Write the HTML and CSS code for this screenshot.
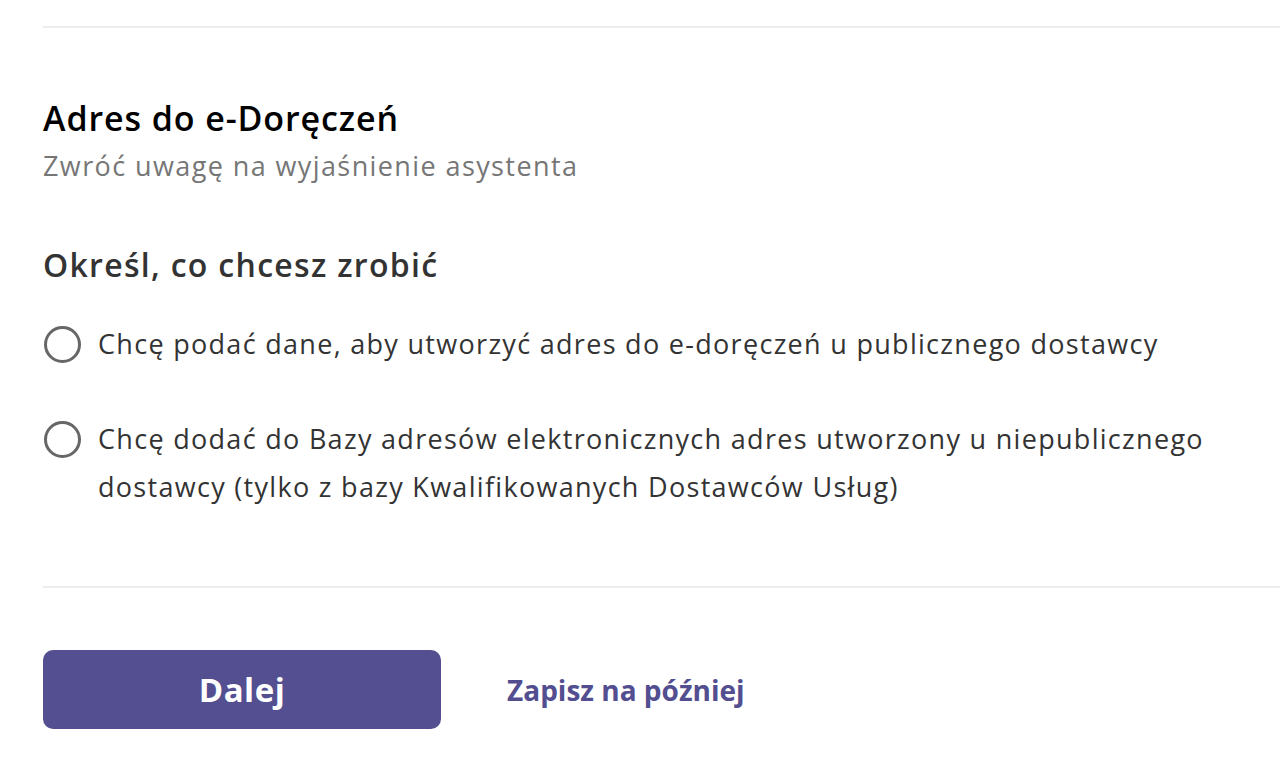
FILE: index.html
```html
<!DOCTYPE html>
<html lang="pl">
<head>
  <meta charset="UTF-8" />
  <title>Adres do e-Doręczeń</title>
  <link rel="stylesheet" href="styles.css">
</head>
<body>
  <div class="page">
    <div class="divider"></div>

    <!-- nagłówek sekcji -->
    <div class="section-head">
      <h1 class="title">Adres do e-Doręczeń</h1>
      <p class="subtitle">Zwróć uwagę na wyjaśnienie asystenta</p>
    </div>

    <!-- wybór opcji -->
    <div class="choice">
      <h2 class="choice-title">Określ, co chcesz zrobić</h2>
      <label class="radio-row">
        <input type="radio" name="action" value="public" />
        <span class="radio-mark"></span>
        <span class="radio-text">Chcę podać dane, aby utworzyć adres do e-doręczeń u publicznego dostawcy</span>
      </label>
      <label class="radio-row">
        <input type="radio" name="action" value="private" />
        <span class="radio-mark"></span>
        <span class="radio-text">Chcę dodać do Bazy adresów elektronicznych adres utworzony u niepublicznego dostawcy (tylko z bazy Kwalifikowanych Dostawców Usług)</span>
      </label>
    </div>

    <div class="divider"></div>

    <!-- przyciski -->
    <div class="actions">
      <button type="button" class="btn-primary">Dalej</button>
      <a href="#" class="link-later">Zapisz na później</a>
    </div>
  </div>
</body>
</html>
```

FILE: styles.css
```css
body {
  margin: 0;
  background: #fff;
  font-family: "Open Sans", "Noto Sans", sans-serif;
  color: #333;
}

.page {
  padding-left: 43px;
  padding-top: 26px;
}

.divider {
  height: 2px;
  background: #ededed;
}

.section-head {
  padding-top: 70px;
}

.title {
  margin: 0;
  font-size: 34px;
  font-weight: 600;
  line-height: 40px;
  color: #000;
  letter-spacing: 0.9px;
}

.subtitle {
  margin: 10px 0 0;
  font-size: 27px;
  line-height: 36px;
  color: #767676;
  letter-spacing: 1.4px;
}

.choice {
  padding-top: 61px;
  padding-bottom: 75px;
}

.choice-title {
  margin: 0 0 35px;
  font-size: 32px;
  font-weight: 600;
  line-height: 40px;
  color: #333;
  letter-spacing: 1.3px;
}

.radio-row {
  display: flex;
  align-items: flex-start;
  gap: 17px;
  margin-bottom: 47px;
  cursor: pointer;
}

.radio-row:last-child {
  margin-bottom: 0;
}

.radio-row input {
  display: none;
}

.radio-mark {
  flex: none;
  width: 37px;
  height: 37px;
  margin-top: 6px;
  margin-left: 1px;
  border: 3px solid #676767;
  border-radius: 50%;
  box-sizing: border-box;
}

.radio-text {
  font-size: 27px;
  line-height: 48px;
  color: #333;
  letter-spacing: 1.3px;
}

.actions {
  display: flex;
  align-items: center;
  gap: 66px;
  padding-top: 62px;
}

.btn-primary {
  width: 398px;
  height: 79px;
  border: none;
  border-radius: 10px;
  background: #534f91;
  color: #fff;
  font-family: inherit;
  font-size: 33px;
  font-weight: 700;
  letter-spacing: 0.5px;
  cursor: pointer;
}

.link-later {
  color: #524e90;
  font-size: 28px;
  font-weight: 700;
  text-decoration: none;
}
```
